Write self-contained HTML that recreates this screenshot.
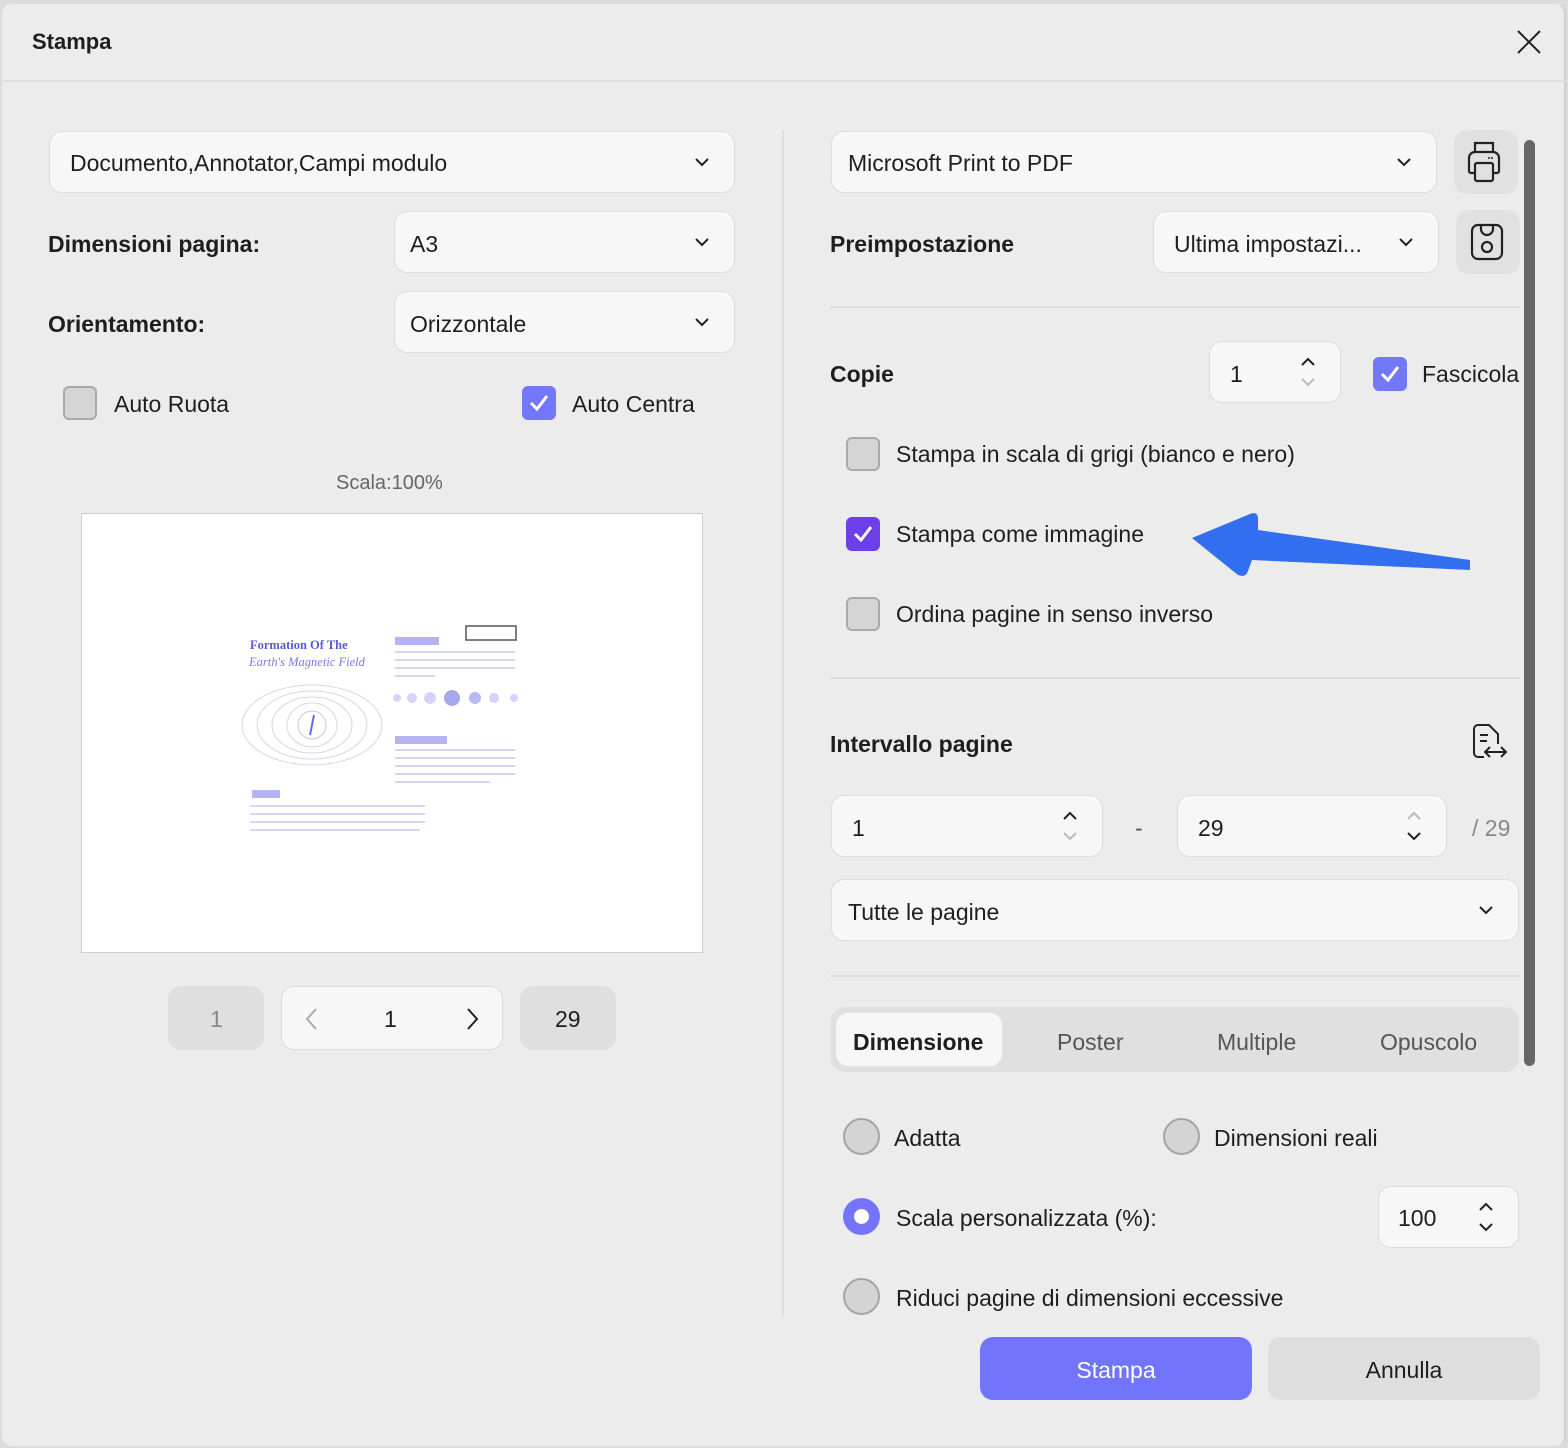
<!DOCTYPE html>
<html><head><meta charset="utf-8"><style>
*{box-sizing:border-box;margin:0;padding:0}
body{width:1568px;height:1448px;background:#dcdcdc;font-family:"Liberation Sans",sans-serif;color:#1e1e1e;position:relative;overflow:hidden}
.win{position:absolute;left:2px;top:4px;width:1564px;height:1442px;background:#ececec;border-radius:10px;border-right:2px solid #d0d0d0}
.a{position:absolute}
.box{position:absolute;background:#f7f7f7;border:1.5px solid #dcdcdc;border-radius:13px}
.t{position:absolute;font-size:23px;line-height:30px;white-space:nowrap}
.b{font-weight:bold;font-size:23px}
.chev{position:absolute;width:14px;height:9px}
.cb{position:absolute;width:34px;height:34px;border-radius:6px;background:#d5d5d5;border:2px solid #a9a9a9}
.cbc{position:absolute;width:34px;height:34px;border-radius:6px;background:#7377fa}
.rd{position:absolute;width:37px;height:37px;border-radius:50%;background:#d4d4d4;border:2px solid #a5a5a5}
.line{position:absolute;height:1.5px;background:#dedede}
</style></head><body>
<div class="win"></div>
<div class="t b" style="left:32px;top:27px;font-size:22px">Stampa</div>
<svg class="a" style="left:1516px;top:29px" width="26" height="26"><path d="M2 2L24 24M24 2L2 24" stroke="#222" stroke-width="2"/></svg>
<div class="line" style="left:2px;top:80px;width:1564px"></div>

<div class="box" style="left:49px;top:131px;width:686px;height:62px"></div>
<div class="t" style="left:70px;top:148px">Documento,Annotator,Campi modulo</div>
<svg class="chev" style="left:695px;top:158px"><path d="M1 1l6 6 6-6" stroke="#222" stroke-width="2" fill="none"/></svg>
<div class="t b" style="left:48px;top:229px">Dimensioni pagina:</div>
<div class="box" style="left:394px;top:211px;width:341px;height:62px"></div>
<div class="t" style="left:410px;top:229px">A3</div>
<svg class="chev" style="left:695px;top:238px"><path d="M1 1l6 6 6-6" stroke="#222" stroke-width="2" fill="none"/></svg>
<div class="t b" style="left:48px;top:309px">Orientamento:</div>
<div class="box" style="left:394px;top:291px;width:341px;height:62px"></div>
<div class="t" style="left:410px;top:309px">Orizzontale</div>
<svg class="chev" style="left:695px;top:318px"><path d="M1 1l6 6 6-6" stroke="#222" stroke-width="2" fill="none"/></svg>
<div class="cb" style="left:63px;top:386px"></div>
<div class="t" style="left:114px;top:389px">Auto Ruota</div>
<div class="cbc" style="left:522px;top:386px"><svg width="34" height="34"><path d="M9 17l6 6 10-13" stroke="#fff" stroke-width="3" fill="none"/></svg></div>
<div class="t" style="left:572px;top:389px">Auto Centra</div>
<div class="t" style="left:336px;top:468px;font-size:20px;color:#666">Scala:100%</div>

<div class="a" style="left:81px;top:513px;width:622px;height:440px;background:#fff;border:1.5px solid #cfcfcf"></div>
<svg class="a" style="left:240px;top:620px" width="290" height="220">
<rect x="226" y="6" width="50" height="14" fill="none" stroke="#555" stroke-width="1.5"/>
<text x="10" y="29" font-family="Liberation Serif" font-weight="bold" font-size="12.5" fill="#5a5ad8">Formation Of The</text>
<text x="9" y="46" font-family="Liberation Serif" font-style="italic" font-size="12.5" fill="#7a7ae0">Earth's Magnetic Field</text>
<rect x="155" y="17" width="44" height="8" fill="#b4b4f4"/>
<g stroke="#c8c8f0" stroke-width="1.5"><line x1="155" y1="32" x2="275" y2="32"/><line x1="155" y1="40" x2="275" y2="40"/><line x1="155" y1="48" x2="275" y2="48"/><line x1="155" y1="56" x2="195" y2="56"/>
<line x1="155" y1="130" x2="275" y2="130"/><line x1="155" y1="138" x2="275" y2="138"/><line x1="155" y1="146" x2="275" y2="146"/><line x1="155" y1="154" x2="275" y2="154"/><line x1="155" y1="162" x2="250" y2="162"/>
<line x1="10" y1="186" x2="185" y2="186"/><line x1="10" y1="194" x2="185" y2="194"/><line x1="10" y1="202" x2="185" y2="202"/><line x1="10" y1="210" x2="180" y2="210"/></g>
<rect x="155" y="116" width="52" height="8" fill="#b4b4f4"/>
<rect x="12" y="170" width="28" height="8" fill="#b4b4f4"/>
<g fill="#d4d4f8"><circle cx="157" cy="78" r="4"/><circle cx="172" cy="78" r="5"/><circle cx="190" cy="78" r="6"/><circle cx="212" cy="78" r="8" fill="#a8a8ee"/><circle cx="235" cy="78" r="6" fill="#b8b8f2"/><circle cx="254" cy="78" r="5"/><circle cx="274" cy="78" r="4"/></g>
<g fill="none" stroke="#d6d6e8"><ellipse cx="72" cy="105" rx="70" ry="40"/><ellipse cx="72" cy="105" rx="55" ry="34"/><ellipse cx="72" cy="105" rx="40" ry="28"/><ellipse cx="72" cy="105" rx="25" ry="22"/></g>
<circle cx="72" cy="105" r="14" fill="#fff" stroke="#c8c8e8"/>
<path d="M74 95l-4 20" stroke="#6a6ae0" stroke-width="2"/>
</svg>

<div class="a" style="left:168px;top:986px;width:96px;height:64px;background:#dfdfdf;border-radius:13px"></div>
<div class="t" style="left:210px;top:1004px;color:#888">1</div>
<div class="box" style="left:281px;top:986px;width:222px;height:64px"></div>
<svg class="a" style="left:305px;top:1008px" width="14" height="22"><path d="M11 1L2 11l9 10" stroke="#aaa" stroke-width="2" fill="none"/></svg>
<div class="t" style="left:384px;top:1004px">1</div>
<svg class="a" style="left:465px;top:1008px" width="14" height="22"><path d="M3 1l9 10-9 10" stroke="#222" stroke-width="2" fill="none"/></svg>
<div class="a" style="left:520px;top:986px;width:96px;height:64px;background:#dfdfdf;border-radius:13px"></div>
<div class="t" style="left:555px;top:1004px">29</div>

<div class="a" style="left:782px;top:130px;width:1.5px;height:1186px;background:#dedede"></div>

<div class="box" style="left:831px;top:131px;width:606px;height:62px"></div>
<div class="t" style="left:848px;top:148px">Microsoft Print to PDF</div>
<svg class="chev" style="left:1397px;top:158px"><path d="M1 1l6 6 6-6" stroke="#222" stroke-width="2" fill="none"/></svg>
<div class="a" style="left:1454px;top:130px;width:64px;height:64px;background:#e1e1e1;border-radius:13px"></div>
<svg class="a" style="left:1466px;top:140px" width="40" height="44"><g fill="none" stroke="#222" stroke-width="2.2"><path d="M9 12V3h18v9"/><path d="M9 33H5a2 2 0 0 1-2-2V18a6 6 0 0 1 6-6h18a6 6 0 0 1 6 6v13a2 2 0 0 1-2 2h-4"/><rect x="9" y="23" width="18" height="18" rx="2"/></g><circle cx="23" cy="18" r="1" fill="#222"/><circle cx="26" cy="18" r="1" fill="#222"/></svg>
<div class="t b" style="left:830px;top:229px">Preimpostazione</div>
<div class="box" style="left:1153px;top:211px;width:286px;height:62px"></div>
<div class="t" style="left:1174px;top:229px">Ultima impostazi...</div>
<svg class="chev" style="left:1399px;top:238px"><path d="M1 1l6 6 6-6" stroke="#222" stroke-width="2" fill="none"/></svg>
<div class="a" style="left:1456px;top:210px;width:64px;height:64px;background:#e1e1e1;border-radius:13px"></div>
<svg class="a" style="left:1470px;top:222px" width="36" height="40"><g fill="none" stroke="#222" stroke-width="2.2"><rect x="2" y="3" width="30" height="34" rx="6"/><path d="M11 3v4a6 6 0 0 0 12 0V3"/><circle cx="17" cy="25" r="5"/></g></svg>
<div class="line" style="left:830px;top:306px;width:690px"></div>

<div class="t b" style="left:830px;top:359px">Copie</div>
<div class="box" style="left:1209px;top:341px;width:132px;height:62px"></div>
<div class="t" style="left:1230px;top:359px">1</div>
<svg class="a" style="left:1300px;top:356px" width="16" height="32"><path d="M2 9l6-6 6 6" stroke="#222" stroke-width="2" fill="none"/><path d="M2 23l6 6 6-6" stroke="#bbb" stroke-width="2" fill="none"/></svg>
<div class="cbc" style="left:1373px;top:357px"><svg width="34" height="34"><path d="M9 17l6 6 10-13" stroke="#fff" stroke-width="3" fill="none"/></svg></div>
<div class="t" style="left:1422px;top:359px">Fascicola</div>

<div class="cb" style="left:846px;top:437px"></div>
<div class="t" style="left:896px;top:439px">Stampa in scala di grigi (bianco e nero)</div>
<div class="cbc" style="left:846px;top:517px;background:#6c3fe8"><svg width="34" height="34"><path d="M9 17l6 6 10-13" stroke="#fff" stroke-width="3" fill="none"/></svg></div>
<div class="t" style="left:896px;top:519px">Stampa come immagine</div>
<svg class="a" style="left:1180px;top:505px" width="300" height="80"><path d="M12 33L70 9Q78 6 78 14L78 25L290 55L290 65L72 55L68 66Q66 73 58 70Z" fill="#316ef0"/></svg>
<div class="cb" style="left:846px;top:597px"></div>
<div class="t" style="left:896px;top:599px">Ordina pagine in senso inverso</div>
<div class="line" style="left:830px;top:677px;width:690px"></div>

<div class="t b" style="left:830px;top:729px">Intervallo pagine</div>
<svg class="a" style="left:1470px;top:723px" width="40" height="40"><g fill="none" stroke="#222" stroke-width="2"><path d="M14 34H8a4 4 0 0 1-4-4V6a4 4 0 0 1 4-4h11l9 9v10"/><path d="M10 12h8M10 18h7"/><path d="M15 29h21M20 24l-5 5 5 5M31 24l5 5-5 5"/></g></svg>
<div class="box" style="left:831px;top:795px;width:272px;height:62px"></div>
<div class="t" style="left:852px;top:813px">1</div>
<svg class="a" style="left:1062px;top:810px" width="16" height="32"><path d="M2 9l6-6 6 6" stroke="#222" stroke-width="2" fill="none"/><path d="M2 23l6 6 6-6" stroke="#bbb" stroke-width="2" fill="none"/></svg>
<div class="t" style="left:1135px;top:813px;color:#555">-</div>
<div class="box" style="left:1177px;top:795px;width:270px;height:62px"></div>
<div class="t" style="left:1198px;top:813px">29</div>
<svg class="a" style="left:1406px;top:810px" width="16" height="32"><path d="M2 9l6-6 6 6" stroke="#bbb" stroke-width="2" fill="none"/><path d="M2 23l6 6 6-6" stroke="#222" stroke-width="2" fill="none"/></svg>
<div class="t" style="left:1472px;top:813px;color:#888">/ 29</div>
<div class="box" style="left:831px;top:879px;width:688px;height:62px"></div>
<div class="t" style="left:848px;top:897px">Tutte le pagine</div>
<svg class="chev" style="left:1479px;top:906px"><path d="M1 1l6 6 6-6" stroke="#222" stroke-width="2" fill="none"/></svg>
<div class="line" style="left:830px;top:975px;width:690px"></div>

<div class="a" style="left:831px;top:1007px;width:688px;height:65px;background:#e0e0e0;border-radius:14px"></div>
<div class="a" style="left:836px;top:1013px;width:166px;height:53px;background:#f7f7f7;border-radius:12px"></div>
<div class="t b" style="left:853px;top:1027px">Dimensione</div>
<div class="t" style="left:1057px;top:1027px;color:#555">Poster</div>
<div class="t" style="left:1217px;top:1027px;color:#555">Multiple</div>
<div class="t" style="left:1380px;top:1027px;color:#555">Opuscolo</div>

<div class="rd" style="left:843px;top:1118px"></div>
<div class="t" style="left:894px;top:1123px">Adatta</div>
<div class="rd" style="left:1163px;top:1118px"></div>
<div class="t" style="left:1214px;top:1123px">Dimensioni reali</div>
<div class="rd" style="left:843px;top:1198px;background:#7474fb;border:none"><div class="a" style="left:11px;top:11px;width:15px;height:15px;border-radius:50%;background:#fff"></div></div>
<div class="t" style="left:896px;top:1203px">Scala personalizzata (%):</div>
<div class="box" style="left:1378px;top:1186px;width:141px;height:62px"></div>
<div class="t" style="left:1398px;top:1203px">100</div>
<svg class="a" style="left:1478px;top:1201px" width="16" height="32"><path d="M2 9l6-6 6 6" stroke="#222" stroke-width="2" fill="none"/><path d="M2 23l6 6 6-6" stroke="#222" stroke-width="2" fill="none"/></svg>
<div class="rd" style="left:843px;top:1278px"></div>
<div class="t" style="left:896px;top:1283px">Riduci pagine di dimensioni eccessive</div>

<div class="a" style="left:1524px;top:140px;width:11px;height:926px;background:#666;border-radius:6px"></div>

<div class="a" style="left:980px;top:1337px;width:272px;height:63px;background:#7275fb;border-radius:13px"></div>
<div class="t" style="left:980px;top:1355px;width:272px;text-align:center;color:#fff">Stampa</div>
<div class="a" style="left:1268px;top:1337px;width:272px;height:63px;background:#dedede;border-radius:13px"></div>
<div class="t" style="left:1268px;top:1355px;width:272px;text-align:center">Annulla</div>
</body></html>
